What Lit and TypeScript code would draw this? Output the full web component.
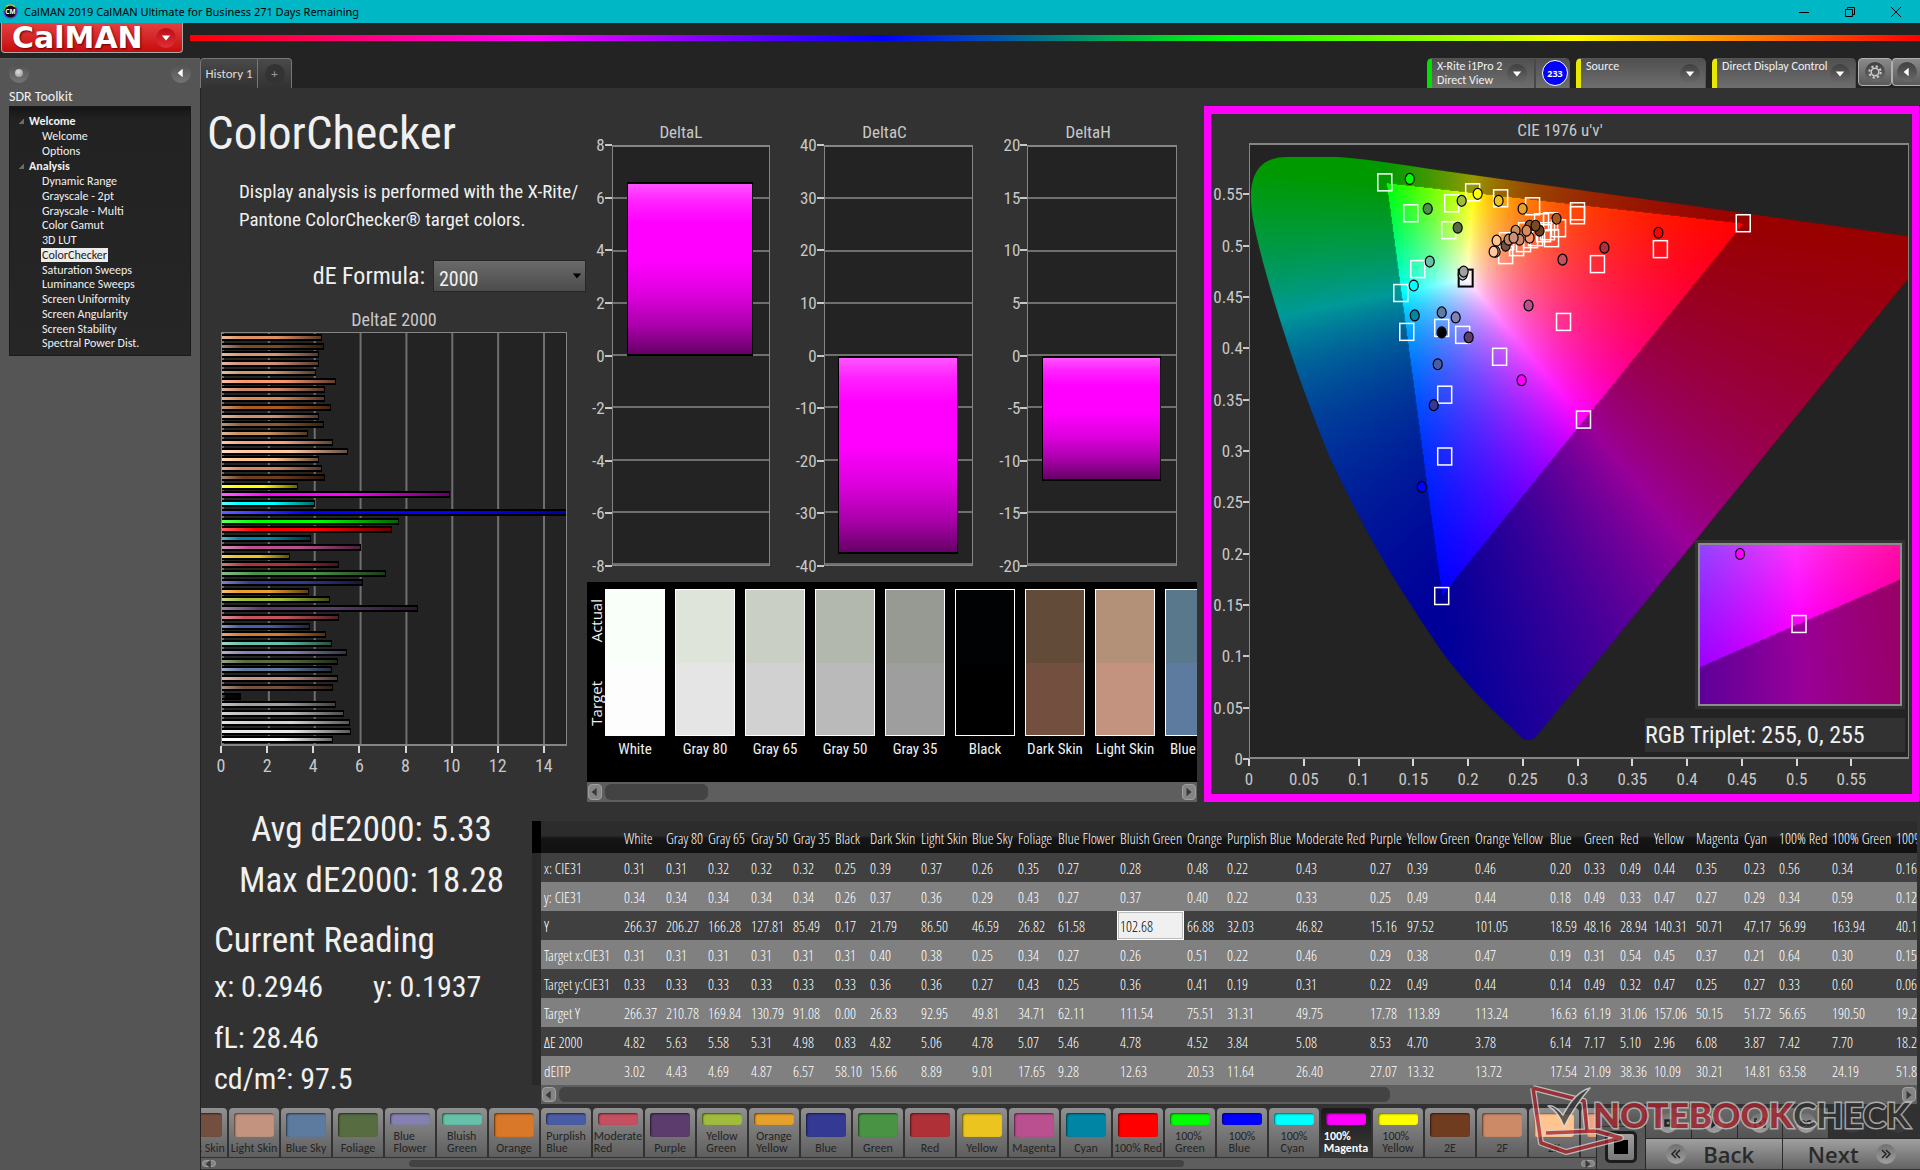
import { LitElement, html, css, svg, nothing } from "lit";
import { customElement, property } from "lit/decorators.js";
import { classMap } from "lit/directives/class-map.js";
import { styleMap } from "lit/directives/style-map.js";

/* ---------- data ---------- */

const NAV = [
  { title: "Welcome", items: ["Welcome", "Options"] },
  {
    title: "Analysis",
    items: ["Dynamic Range", "Grayscale - 2pt", "Grayscale - Multi", "Color Gamut", "3D LUT", "ColorChecker",
      "Saturation Sweeps", "Luminance Sweeps", "Screen Uniformity", "Screen Angularity", "Screen Stability", "Spectral Power Dist."],
  },
];

const DE_BARS: [number, string][] = [
  [4.35, "#e09060"], [4.45, "#7a4a25"], [4.25, "#d89470"], [4.25, "#cf9078"], [4.1, "#cc9870"], [4.95, "#f89870"],
  [4.5, "#d08868"], [4.5, "#dd8858"], [4.75, "#a85a22"], [4.25, "#cc9070"], [4.45, "#90582e"], [3.75, "#c89060"],
  [4.85, "#f4a47c"], [5.5, "#ffc8a4"], [4.25, "#ffc490"], [4.35, "#d48664"], [4.5, "#703c20"], [3.3, "#ffff00"],
  [9.95, "#ff00ff"], [4.05, "#00ffff"], [18.28, "#0000ff"], [7.7, "#00ff00"], [7.42, "#ff0000"], [3.87, "#0086a5"],
  [6.08, "#bb5090"], [2.96, "#ecc420"], [5.1, "#b03038"], [7.17, "#489444"], [6.14, "#343a94"], [3.78, "#e6a02c"],
  [4.7, "#a0bc3c"], [8.53, "#5c3c6c"], [5.08, "#c45060"], [3.84, "#4a5ca4"], [4.52, "#d87828"], [4.78, "#66c0aa"],
  [5.46, "#8480b0"], [5.07, "#586c40"], [4.78, "#5e7ca0"], [5.06, "#c49480"], [4.82, "#745040"], [0.83, "#050505"],
  [4.98, "#a0a0a0"], [5.31, "#bcbcbc"], [5.58, "#d2d2d2"], [5.63, "#e8e8e8"], [4.82, "#ffffff"],
];

const SWATCHES: [string, string, string][] = [
  ["White", "#f9fff9", "#fdfdfd"], ["Gray 80", "#dfe4da", "#e5e5e5"], ["Gray 65", "#cacfc5", "#d1d1d1"],
  ["Gray 50", "#b2b8ad", "#bababa"], ["Gray 35", "#979a92", "#9e9e9e"], ["Black", "#010203", "#000000"],
  ["Dark Skin", "#634b39", "#734f40"], ["Light Skin", "#b29178", "#c39380"], ["Blue Sky", "#59788b", "#5d7a9f"],
];

const COLS: [string, number][] = [
  ["White", 42], ["Gray 80", 42], ["Gray 65", 43], ["Gray 50", 42], ["Gray 35", 42], ["Black", 35], ["Dark Skin", 51],
  ["Light Skin", 51], ["Blue Sky", 46], ["Foliage", 40], ["Blue Flower", 62], ["Bluish Green", 67], ["Orange", 40],
  ["Purplish Blue", 69], ["Moderate Red", 74], ["Purple", 37], ["Yellow Green", 68], ["Orange Yellow", 75], ["Blue", 34],
  ["Green", 36], ["Red", 34], ["Yellow", 42], ["Magenta", 48], ["Cyan", 35], ["100% Red", 53], ["100% Green", 64], ["100% Blue", 64],
];

const ROWS: [string, string][] = [
  ["x: CIE31", "0.31 0.31 0.32 0.32 0.32 0.25 0.39 0.37 0.26 0.35 0.27 0.28 0.48 0.22 0.43 0.27 0.39 0.46 0.20 0.33 0.49 0.44 0.35 0.23 0.56 0.34 0.16"],
  ["y: CIE31", "0.34 0.34 0.34 0.34 0.34 0.26 0.37 0.36 0.29 0.43 0.27 0.37 0.40 0.22 0.33 0.25 0.49 0.44 0.18 0.49 0.33 0.47 0.27 0.29 0.34 0.59 0.12"],
  ["Y", "266.37 206.27 166.28 127.81 85.49 0.17 21.79 86.50 46.59 26.82 61.58 102.68 66.88 32.03 46.82 15.16 97.52 101.05 18.59 48.16 28.94 140.31 50.71 47.17 56.99 163.94 40.14"],
  ["Target x:CIE31", "0.31 0.31 0.31 0.31 0.31 0.31 0.40 0.38 0.25 0.34 0.27 0.26 0.51 0.22 0.46 0.29 0.38 0.47 0.19 0.31 0.54 0.45 0.37 0.21 0.64 0.30 0.15"],
  ["Target y:CIE31", "0.33 0.33 0.33 0.33 0.33 0.33 0.36 0.36 0.27 0.43 0.25 0.36 0.41 0.19 0.31 0.22 0.49 0.44 0.14 0.49 0.32 0.47 0.25 0.27 0.33 0.60 0.06"],
  ["Target Y", "266.37 210.78 169.84 130.79 91.08 0.00 26.83 92.95 49.81 34.71 62.11 111.54 75.51 31.31 49.75 17.78 113.89 113.24 16.63 61.19 31.06 157.06 50.15 51.72 56.65 190.50 19.23"],
  ["ΔE 2000", "4.82 5.63 5.58 5.31 4.98 0.83 4.82 5.06 4.78 5.07 5.46 4.78 4.52 3.84 5.08 8.53 4.70 3.78 6.14 7.17 5.10 2.96 6.08 3.87 7.42 7.70 18.28"],
  ["dEITP", "3.02 4.43 4.69 4.87 6.57 58.10 15.66 8.89 9.01 17.65 9.28 12.63 20.53 11.64 26.40 27.07 13.32 13.72 17.54 21.09 38.36 10.09 30.21 14.81 63.58 24.19 51.84"],
];

const PATCHES: [string, string][] = [
  ["Dark Skin", "#734f40"], ["Light Skin", "#c39380"], ["Blue Sky", "#5d7a9f"], ["Foliage", "#576c41"], ["Blue|Flower", "#8480b0"],
  ["Bluish|Green", "#66c0aa"], ["Orange", "#d87828"], ["Purplish|Blue", "#4a5ca4"], ["Moderate|Red", "#c45060"], ["Purple", "#5c3c6c"],
  ["Yellow|Green", "#a0bc3c"], ["Orange|Yellow", "#e6a02c"], ["Blue", "#343a94"], ["Green", "#489444"], ["Red", "#b03038"],
  ["Yellow", "#ecc420"], ["Magenta", "#bb5090"], ["Cyan", "#0086a5"], ["100% Red", "#ff0000"], ["100%|Green", "#00ff00"],
  ["100%|Blue", "#0000ff"], ["100%|Cyan", "#00ffff"], ["100%|Magenta", "#ff00ff"], ["100%|Yellow", "#ffff00"],
  ["2E", "#703c20"], ["2F", "#cc8a66"], ["2K", "#ffc490"], ["5D", "#f4a47c"],
];

/* Marker centres in plot pixels; the plot spans 659 x 614 units for u' 0..0.601, v' 0.6..0 */
const TARGETS: [number, number][] = [
  [135, 37], [161, 68], [202, 58], [223, 47], [251, 53], [199, 85], [283, 61], [328, 66], [328, 70], [494, 78], [411, 104],
  [348, 119], [168, 124], [151, 148], [157, 187], [192, 183], [213, 190], [250, 212], [195, 250], [334, 275], [314, 177],
  [195, 312], [192, 452],
  [257, 96], [256, 110], [267, 102], [274, 98], [281, 94], [286, 92], [276, 86], [292, 77], [301, 76], [309, 83], [302, 93], [294, 88], [298, 86],
];
const READINGS: [number, number, string][] = [
  [160, 34, "#00ff00"], [178, 64, "#489444"], [212, 56, "#a0bc3c"], [228, 49, "#ffff00"], [249, 56, "#ecc420"],
  [208, 83, "#586c40"], [273, 64, "#e6a02c"], [180, 117, "#66c0aa"], [164, 141, "#00ffff"], [165, 171, "#0086a5"],
  [192, 168, "#5e7ca0"], [206, 173, "#8480b0"], [192, 188, "#000000"], [219, 193, "#5c3c6c"], [188, 220, "#4a5ca4"],
  [184, 261, "#343a94"], [272, 236, "#ff00ff"], [279, 161, "#bb5090"], [313, 115, "#c45060"], [355, 103, "#b03038"],
  [409, 88, "#ff0000"], [172, 343, "#0000ff"], [213, 130, "#bcbcbc"], [214, 127, "#a0a0a0"],
  [247, 96, "#ffc490"], [246, 107, "#f4a47c"], [244, 107, "#ffc8a4"], [256, 101, "#745040"], [259, 95, "#c48860"],
  [266, 86, "#c89060"], [270, 95, "#d08868"], [264, 93, "#cf9078"], [280, 81, "#90582e"], [290, 86, "#703c20"],
  [280, 93, "#f89870"], [286, 81, "#7a4a25"], [277, 86, "#dd8858"], [307, 74, "#a85a22"],
];

/* ---------- chromaticity rendering ---------- */

function traceLocus(c: CanvasRenderingContext2D) {
  c.beginPath();
  c.moveTo(37, 12);
  c.lineTo(88, 12);
  c.quadraticCurveTo(112, 13, 180, 24);
  c.lineTo(493, 68);
  c.lineTo(690, 96);
  c.lineTo(286, 594);
  c.quadraticCurveTo(280, 600, 272, 595);
  c.bezierCurveTo(262, 582, 236, 566, 194, 511);
  c.bezierCurveTo(165, 466, 133, 425, 81, 316);
  c.bezierCurveTo(48, 236, 16, 138, 4, 80);
  c.bezierCurveTo(-5, 34, 6, 12, 37, 12);
  c.closePath();
}

/** Full-brightness RGB for a chromaticity; colours outside the gamut are dimmed. */
function chroma(x: number, y: number): [number, number, number] {
  const yy = Math.max(y, 0.0001);
  const X = x / yy, Z = (1 - x - y) / yy;
  const lin = [3.2406 * X - 1.5372 - 0.4986 * Z, -0.9689 * X + 1.8758 + 0.0415 * Z, 0.0557 * X - 0.204 + 1.057 * Z];
  const dim = Math.min(...lin) < 0 ? 0.6 : 1;
  const max = Math.max(...lin);
  return lin.map((v) => (dim * 255 * Math.max(v, 0)) / max) as [number, number, number];
}

function paint(canvas: HTMLCanvasElement, toXY: (px: number, py: number) => [number, number]) {
  const c = canvas.getContext("2d")!;
  const { width, height } = canvas;
  const img = c.createImageData(width, height);
  for (let py = 0, i = 0; py < height; py++) {
    for (let px = 0; px < width; px++, i += 4) {
      const [r, g, b] = chroma(...toXY(px + 0.5, py + 0.5));
      img.data[i] = r; img.data[i + 1] = g; img.data[i + 2] = b; img.data[i + 3] = 255;
    }
  }
  c.putImageData(img, 0, 0);
}

/* ---------- shared styles ---------- */

const base = css`
  *, *::before, *::after { box-sizing: border-box; }
  button, select { font: inherit; color: inherit; margin: 0; padding: 0; border: 0; background: none; }
  .narrow { font-family: "Roboto Condensed", "Liberation Sans", sans-serif; }
`;

const arrow = (dir: "left" | "right" | "down") => {
  const d = { left: "M8 1 L2 6 L8 11 Z", right: "M3 1 L9 6 L3 11 Z", down: "M1 3 L11 3 L6 9 Z" }[dir];
  return html`<svg class="arrow" viewBox="0 0 12 12" width="10" height="10" aria-hidden="true">${svg`<path d=${d} fill="currentColor"></path>`}</svg>`;
};

/* ---------- scrollbar ---------- */

@customElement("scroll-strip")
export class ScrollStrip extends LitElement {
  @property({ type: Number }) start = 0;
  @property({ type: Number }) size = 50;
  static styles = [base, css`
    :host { display: flex; align-items: stretch; background: #5e5e5e; color: #3a3a3a; }
    button { flex: none; width: 14px; display: flex; align-items: center; justify-content: center; background: #858585; border: 1px solid #a0a0a0; border-radius: 4px; margin: 2px 1px; }
    .track { flex: 1; margin: 2px; display: flex; }
    .thumb { background: #434343; border-radius: 6px; }
    svg { width: 10px; height: 14px; }
  `];
  render() {
    return html`
      <button aria-label="Scroll left">${arrow("left")}</button>
      <div class="track">
        <div style=${styleMap({ width: `${this.start}%` })}></div>
        <div class="thumb" style=${styleMap({ width: `${this.size}%` })}></div>
      </div>
      <button aria-label="Scroll right">${arrow("right")}</button>`;
  }
}

/* ---------- DeltaL / DeltaC / DeltaH ---------- */

@customElement("delta-chart")
export class DeltaChart extends LitElement {
  @property() name = "";
  @property({ type: Number }) max = 8;
  @property({ type: Number }) value = 0;
  static styles = [base, css`
    :host { display: block; color: #c8c8c8; }
    .title { text-align: center; font-size: 17px; line-height: 25px; }
    .body { display: flex; height: 421px; }
    .axis { display: flex; flex-direction: column; justify-content: space-between; font-size: 17px; }
    .mark { height: 0; display: flex; align-items: center; justify-content: flex-end; }
    .mark::after { content: ""; width: 7px; height: 2px; background: #c8c8c8; }
    .plot { flex: 1; position: relative; display: flex; flex-direction: column; background: #232323; border: 1px solid #858585; border-top: 2px solid #858585; }
    .line { flex: 1; border-bottom: 2px solid #6f6f6f; }
    .line:last-of-type { border-bottom-width: 1px; }
    .bar { position: absolute; left: 9%; right: 10%; border: 2px solid #000; border-left-width: 1px; border-right-width: 1px;
      background: linear-gradient(#ff55ff, #ff22ff 10%, #ff00ff 23%, #ff00ff 45%, #dd00dd 65%, #a800a8 84%, #660066); }
  `];
  render() {
    const top = 50 - (Math.max(this.value, 0) / this.max) * 50;
    const ticks = Array.from({ length: 9 }, (_, i) => this.max - (i * this.max) / 4);
    return html`
      <div class="title narrow">${this.name}</div>
      <div class="body">
        <div class="axis narrow">${ticks.map((t) => html`<span class="mark">${t}</span>`)}</div>
        <div class="plot">
          ${ticks.slice(1).map(() => html`<div class="line"></div>`)}
          <div class="bar" style=${styleMap({ top: `${top}%`, height: `${(Math.abs(this.value) / this.max) * 50}%` })}></div>
        </div>
      </div>`;
  }
}

/* ---------- CIE 1976 chart ---------- */

@customElement("cie-chart")
export class CieChart extends LitElement {
  static styles = [base, css`
    :host { display: flex; flex-direction: column; border: 8px solid #ff00ff; border-left-width: 7px; border-right-width: 7px; color: #c8c8c8; background: #323232; padding: 4px 3px 0 0; font-size: 17px; }
    .title { text-align: center; line-height: 25px; }
    .body { display: grid; grid-template-columns: 38px 1fr; grid-template-rows: 616px 35px; }
    .yaxis { display: grid; grid-auto-rows: 1fr; }
    .yaxis span { align-self: end; height: 0; display: flex; align-items: center; justify-content: flex-end; }
    .yaxis span::after { content: ""; width: 6px; height: 2px; background: #c8c8c8; }
    .xaxis { grid-column: 2; display: flex; }
    .xaxis span { flex: 0 0 8.3%; }
    .xaxis i { font-style: normal; width: 0; display: flex; flex-direction: column; align-items: center; line-height: 26px; }
    .xaxis i::before { content: ""; width: 2px; height: 7px; background: #d8d8d8; }
    .plot { position: relative; background: #232323; border: 2px solid #858585; border-width: 2px 1px 2px 1px; overflow: hidden; }
    canvas, svg.markers { position: absolute; left: 0; top: 0; width: 100%; height: 100%; }
    .inset { position: absolute; right: 3px; top: 395px; width: 210px; height: 169px; padding: 3px; background: #323232; }
    .frame { position: relative; height: 100%; border: 2px solid #8c8c8c; }
    .triplet { position: absolute; right: 3px; bottom: 5px; width: 260px; font-size: 24px; line-height: 34px; color: #f0f0f0; background: #323232; white-space: nowrap; }
  `];
  firstUpdated() {
    const main = this.renderRoot.querySelector<HTMLCanvasElement>(".main")!;
    paint(main, (px, py) => {
      const u = px / 1096, v = 0.6 - py / 1022, d = 6 * u - 16 * v + 12;
      return [(9 * u) / d, (4 * v) / d];
    });
    const c = main.getContext("2d")!;
    c.globalCompositeOperation = "destination-in";
    traceLocus(c);
    c.fill();
    paint(this.renderRoot.querySelector<HTMLCanvasElement>(".detail")!, (px, py) => [0.271 + px / 2000, 0.2035 - py / 1600]);
  }
  private box(x: number, y: number, color = "#fff") {
    return svg`<rect x=${x - 7} y=${y - 8} width="14" height="17" fill="none" stroke=${color} stroke-width=${color === "#fff" ? 1.5 : 2}></rect>`;
  }
  private dot(x: number, y: number, fill: string) {
    return svg`<ellipse cx=${x} cy=${y} rx="4.5" ry="5.5" fill=${fill} stroke="#000" stroke-width="1.2"></ellipse>`;
  }
  render() {
    const marks = Array.from({ length: 12 }, (_, i) => Number((i * 0.05).toFixed(2)));
    return html`
      <div class="title narrow">CIE 1976 u'v'</div>
      <div class="body narrow">
        <div class="yaxis">${[...marks].reverse().map((m) => html`<span>${m}</span>`)}</div>
        <div class="plot">
          <canvas class="main" width="659" height="614"></canvas>
          <svg class="markers" viewBox="0 0 659 614" preserveAspectRatio="none" aria-hidden="true">
            ${TARGETS.map(([x, y]) => this.box(x, y))}
            ${this.box(216, 133, "#000")}
            ${READINGS.map(([x, y, f]) => this.dot(x, y, f))}
          </svg>
          <div class="inset"><div class="frame">
            <canvas class="detail" width="200" height="160"></canvas>
            <svg class="markers" viewBox="0 0 200 160" preserveAspectRatio="none" aria-hidden="true">
              ${this.dot(40, 9, "#ff00ff")}${this.box(99, 79)}
            </svg>
          </div></div>
          <div class="triplet">RGB Triplet: 255, 0, 255</div>
        </div>
        <div class="xaxis">${marks.map((m) => html`<span><i>${m}</i></span>`)}</div>
      </div>`;
  }
}

/* ---------- application ---------- */

@customElement("app-root")
export class AppRoot extends LitElement {
  static styles = [base, css`
    :host { display: flex; flex-direction: column; min-height: 100vh; background: #232323; color: #f0f0f0; font-family: Carlito, Lato, sans-serif; font-size: 13px; overflow: hidden; }

    .titlebar { display: flex; align-items: center; height: 23px; padding: 0 4px 0 3px; gap: 6px; background: #00b7c6; color: #000; font: 11px/23px "Noto Sans", sans-serif; }
    .titlebar .name { flex: 1; }
    .winctl { width: 40px; display: flex; align-items: center; justify-content: center; }
    .brand { display: flex; align-items: center; height: 35px; }
    .logo { align-self: flex-start; display: flex; align-items: center; justify-content: space-between; width: 182px; height: 30px; margin-left: 1px; padding: 0 6px 0 10px; background: linear-gradient(#e24040, #c80c0c); border: 1px solid #a8a8a8; border-top: 0; border-radius: 0 0 4px 4px; color: #fff; font: 700 30px/28px "DejaVu Sans", sans-serif; text-shadow: 1px 1px 2px #600; }
    .rainbow { flex: 1; height: 6px; margin: 0 0 5px 7px; background: linear-gradient(to right, #f00, #f0f 20%, #00f 40%, #0f0 60%, #ff0 80%, #f00); }
    .knob { flex: none; display: flex; align-items: center; justify-content: center; width: 20px; height: 20px; border-radius: 50%; background: linear-gradient(#404040, #6a6a6a); color: #fff; }
    .logo .knob { background: linear-gradient(#b80c14, #e03038); }

    .main { flex: 1; display: flex; }
    .sidebar { flex: none; width: 200px; background: #555; padding: 4px 9px 0; border-top: 1px solid #5e5e5e; }
    .sidebar .tools { display: flex; justify-content: space-between; }
    .tools .knob { background: linear-gradient(#505050, #747474); }
    .bead { width: 8px; height: 8px; border-radius: 50%; background: radial-gradient(circle at 40% 35%, #e0e0e0, #8a8a8a); }
    .kit { font-size: 14px; line-height: 18px; margin-top: 5px; }
    .tree { padding: 6px 0 6px 19px; height: 250px; background: linear-gradient(#151515, #222 5%, #262626); border: 1px solid #1a1a1a; font-size: 12px; }
    .tree h2 { margin: 0; font-size: 12px; line-height: 16px; display: flex; align-items: center; }
    .tree h2::before { content: ""; width: 5px; height: 5px; margin: 0 5px 0 -10px; background: linear-gradient(135deg, transparent 50%, #6a6a6a 50%); }
    .tree ul { margin: 0; padding: 0 0 0 12px; list-style: none; display: grid; grid-auto-rows: 1fr; }
    .tree .short { height: 29px; }
    .tree .long { height: 177px; }
    .tree a { color: inherit; text-decoration: none; padding: 0 1px; line-height: 14px; display: inline-block; }
    .tree a.on { background: #ececec; color: #222; }

    .work { flex: 1; min-width: 0; display: flex; flex-direction: column; }
    .tabbar { display: flex; justify-content: space-between; height: 30px; }
    .tabs { display: flex; }
    .tab { width: 58px; border: 1px solid #777; border-bottom: 0; border-radius: 4px 0 0 0; background: linear-gradient(#4a4a4a, #323232); color: #ddd; font-size: 13px; }
    .tab.add { width: 34px; border-left: 0; border-radius: 0 4px 0 0; display: flex; align-items: center; justify-content: center; }
    .add .knob { background: #333; color: #999; }
    .devices { display: flex; gap: 6px; font-size: 12px; line-height: 14px; }
    .device { display: flex; align-items: center; background: linear-gradient(#505050, #6e6e6e); border: 1px solid #555; border-bottom: 0; border-radius: 5px 5px 0 0; padding: 0 5px 0 5px; text-align: left; border-left: 5px solid #e8e800; }
    .device .lbl { flex: 1; align-self: flex-start; }
    .device.meter { width: 143px; border-left-color: #00e000; padding-right: 1px; }
    .device.src { width: 130px; }
    .device.disp { width: 144px; }
    .device.disp .lbl { white-space: nowrap; margin-right: -24px; }
    .level { margin-left: 7px; padding: 1px 0 0 6px; border-left: 2px solid #484848; align-self: stretch; }
    .level b { display: flex; align-items: center; justify-content: center; width: 26px; height: 26px; border-radius: 50%; background: #00f; border: 1px solid #fff; color: #fff; font: 700 9px "Open Sans", sans-serif; }
    .sq { width: 34px; height: 28px; display: flex; align-items: center; justify-content: center; background: linear-gradient(#8a8a8a, #5a5a5a); border: 1px solid #b0b0b0; border-radius: 4px; margin-left: -4px; }
    .sq.edge { width: 28px; margin-left: -6px; border-right: 0; border-radius: 4px 0 0 4px; }

    .content { flex: 1; display: flex; flex-direction: column; background: #323232; border-left: 1px solid #222; }
    .upper { display: grid; grid-template-columns: 386fr 610fr 722fr; padding-right: 1px; }
    .intro { padding: 15px 0 0 6px; min-width: 0; }
    h1 { margin: 0; font-size: 47px; line-height: 60px; font-weight: 400; }
    .lead { margin: 15px 0 0 32px; font-size: 19px; line-height: 28px; white-space: nowrap; }
    .formula { display: flex; justify-content: flex-end; align-items: center; gap: 8px; margin: 26px 1px 0 0; font-size: 24px; line-height: 32px; }
    .formula select { appearance: none; width: 153px; height: 32px; padding: 2px 5px 0; font-size: 20px; background: linear-gradient(#6a6a6a, #4c4c4c); border: 1px solid #262626; }
    .pick { position: relative; display: flex; }
    .pick svg { position: absolute; right: 4px; top: 11px; color: #000; pointer-events: none; }
    .de { margin: 15px 20px 0 14px; color: #c8c8c8; font-size: 18px; }
    .de .cap { text-align: center; line-height: 25px; }
    .de .plot { height: 414px; display: flex; flex-direction: column; overflow: hidden; border: 2px solid #858585; border-width: 1px 1px 2px; background: linear-gradient(to right, #6f6f6f 2px, transparent 2px) 0 0 / 13.3333% 100% #232323; }
    .de .row { flex: 1; display: flex; align-items: center; }
    .de .bar { height: 7px; flex: none; border: 2px solid #000; border-width: 2px 1px; border-left: 0; background-image: linear-gradient(to right, rgba(255,255,255,.38), rgba(255,255,255,0) 20%, rgba(0,0,0,0) 55%, rgba(0,0,0,.6)); }
    .ticks { display: flex; }
    .ticks span { flex: 0 0 13.3333%; }
    .ticks i { font-style: normal; width: 0; display: flex; flex-direction: column; align-items: center; line-height: 25px; }
    .ticks i::before { content: ""; width: 2px; height: 7px; background: #d8d8d8; }

    .centre { min-width: 0; display: flex; flex-direction: column; gap: 16px; padding-top: 32px; }
    .deltas { display: grid; grid-template-columns: repeat(3, 1fr); gap: 26px; padding: 0 20px 0 5px; }
    .compare { background: #000; overflow: hidden; }
    .strip { display: flex; gap: 10px; height: 200px; padding: 7px 0 0; overflow: hidden; }
    .side { flex: none; width: 18px; margin-right: -10px; height: 147px; padding: 10px 0; display: flex; flex-direction: column-reverse; justify-content: space-between; align-items: center; font: 15px "Open Sans", sans-serif; }
    .side span { writing-mode: vertical-rl; transform: rotate(180deg); line-height: 16px; }
    .chip { flex: none; width: 60px; }
    .chip .tone { height: 147px; border: 1px solid #fff; display: flex; flex-direction: column; }
    .tone div { flex: 1; }
    .chip p { margin: 0 -10px; text-align: center; font-size: 15px; line-height: 26px; }
    .compare scroll-strip { height: 20px; }
    cie-chart { margin: 18px 0 0 7px; }

    .lower { display: flex; }
    .stats { flex: none; width: 331px; padding: 2px 0 0 13px; white-space: nowrap; }
    .stats p { margin: 0; }
    .big { font-size: 35px; line-height: 51px; }
    .stats .mid { text-align: center; margin-left: -3px; }
    .stats .current { margin-top: 9px; }
    .val { display: flex; font-size: 30px; line-height: 41px; }
    .val span { width: 161px; }
    .stats .lum { margin-top: 10px; }
    .grid { flex: 1; min-width: 0; margin: 19px 3px 0 0; overflow: hidden; }
    .clip { overflow: hidden; }
    table { table-layout: fixed; width: 1425px; border-collapse: collapse; color: #fff; font: 15px "Open Sans Condensed Light", "Roboto Condensed", sans-serif; }
    th, td { padding: 0 0 0 3px; font-weight: 400; text-align: left; white-space: nowrap; height: 29px; line-height: 28px; }
    thead th { height: 32px; padding-top: 2px; background: linear-gradient(#2c2c2c 45%, #151515 55%, #111); }
    tbody tr { background: #404040; }
    tbody tr:nth-child(even) { background: #808080; }
    .rail { background: #292929; }
    thead .rail { background: #000; }
    td.sel { background: #f0f0f0; color: #000; box-shadow: inset 0 0 0 1px #fff, inset 0 0 0 2px #bbb; }
    .grid scroll-strip { height: 19px; margin-left: 9px; }

    .footer { position: relative; display: flex; height: 62px; margin-top: 4px; padding-bottom: 1px; background: #323232; }
    .patches { flex: 1; min-width: 0; overflow: hidden; }
    .row { display: flex; gap: 2px; }
    .patches .row { margin-left: -24px; height: 50px; }
    .patch { flex: none; width: 50px; height: 49px; display: flex; flex-direction: column; align-items: center; justify-content: space-between; padding: 5px 0 3px; border-radius: 4px 4px 0 0; background: linear-gradient(#909090, #5e5e5e); color: #242424; font-size: 12px; line-height: 12px; text-align: left; white-space: nowrap; }
    .patch i { width: 40px; height: 24px; border-radius: 3px; box-shadow: inset 1px 1px 2px rgba(0,0,0,.6); }
    .patch.two i { height: 12px; }
    .patch.on { background: linear-gradient(#1a1a1a, #3a3a3a); color: #fff; font-weight: 700; }
    .patches scroll-strip { height: 11px; }
    .stop { flex: none; width: 50px; border: solid #262626; border-width: 0 1px; display: flex; flex-direction: column; align-items: center; background: #585858; }
    .stop .up { width: 100%; height: 19px; background: linear-gradient(#6a6a6a, #505050); border-bottom: 1px solid #333; display: flex; justify-content: center; align-items: flex-end; }
    .stop .sqr { margin-top: 4px; width: 32px; height: 32px; border: 3px solid #1c1c1c; border-radius: 5px; background: linear-gradient(#a0a0a0, #777); display: flex; align-items: center; justify-content: center; }
    .stop .sqr::before { content: ""; width: 14px; height: 14px; background: #000; }
    .play { flex: none; width: 274px; display: grid; grid-template-columns: repeat(6, 1fr); grid-template-rows: 30px 30px; gap: 1px; background: #2a2a2a; }
    .play button { display: flex; align-items: center; justify-content: center; background: linear-gradient(#6a6a6a, #545454); color: #222; }
    .play .dark { background: #333; opacity: .8; }
    .play .rd { display: flex; align-items: center; justify-content: center; width: 20px; height: 20px; border-radius: 50%; background: linear-gradient(#707070, #a0a0a0); }
    .play .dark .rd { background: #404040; }
    .play .wide { grid-column: span 3; gap: 17px; font: 600 22px "Open Sans", sans-serif; color: #2a2a2a; background: linear-gradient(#a0a0a0, #636363); }
    .play .back { padding-right: 8px; }

    .mark { position: absolute; right: 10px; top: -24px; display: flex; align-items: flex-start; opacity: .78; pointer-events: none; }
    .mark svg { margin-right: -31px; }
    .word { font: 900 35px/40px Lato, sans-serif; padding-top: 10px; display: flex; color: #a8262e; paint-order: stroke fill; -webkit-text-stroke: 3px #c4c4c4; }
    .word span { color: #303030; font-weight: 700; }
  `];

  private renderTop() {
    return html`
      <header class="titlebar">
        <svg width="15" height="15" viewBox="0 0 16 16" aria-hidden="true">
          <circle cx="8" cy="8" r="7" fill="#0a0a0a" stroke="#6a3ad0" stroke-width="1.5"></circle>
          <path d="M3 3A7 7 0 0 1 13 3" fill="none" stroke="#b8d820" stroke-width="1.5"></path>
          <path d="M1 7A7 7 0 0 1 3 3" fill="none" stroke="#30c040" stroke-width="1.5"></path>
          <text x="8" y="10.500" text-anchor="middle" font-family="Open Sans" font-weight="700" font-size="7" fill="#fff">CM</text>
        </svg>
        <span class="name">CalMAN 2019 CalMAN Ultimate for Business 271 Days Remaining</span>
        <button class="winctl" aria-label="Minimize"><svg width="12" height="12" viewBox="0 0 12 12"><path d="M1 6.500H11" stroke="#000"></path></svg></button>
        <button class="winctl" aria-label="Restore"><svg width="12" height="12" viewBox="0 0 12 12" fill="none" stroke="#000"><path d="M1.500 3.500H8.500V10.500H1.500ZM3.500 3.500V1.500H10.500V8.500H8.500"></path></svg></button>
        <button class="winctl" aria-label="Close"><svg width="12" height="12" viewBox="0 0 12 12" stroke="#000"><path d="M1 1L11 11M11 1L1 11"></path></svg></button>
      </header>
      <div class="brand">
        <button class="logo">CalMAN <span class="knob">${arrow("down")}</span></button>
        <div class="rainbow"></div>
      </div>`;
  }

  private renderSidebar() {
    return html`
      <nav class="sidebar">
        <div class="tools">
          <button class="knob" aria-label="Pin"><span class="bead"></span></button>
          <button class="knob" aria-label="Collapse">${arrow("left")}</button>
        </div>
        <div class="kit">SDR Toolkit</div>
        <div class="tree">
          ${NAV.map((g) => html`
            <h2>${g.title}</h2>
            <ul class=${g.items.length > 2 ? "long" : "short"}>
              ${g.items.map((i) => html`<li><a href="#" class=${classMap({ on: i === "ColorChecker" })}>${i}</a></li>`)}
            </ul>`)}
        </div>
      </nav>`;
  }

  private renderTabs() {
    return html`
      <div class="tabbar">
        <div class="tabs">
          <button class="tab">History 1</button>
          <button class="tab add" aria-label="Add history"><span class="knob">+</span></button>
        </div>
        <div class="devices">
          <button class="device meter"><span class="lbl">X-Rite i1Pro 2<br>Direct View</span><span class="knob">${arrow("down")}</span><span class="level"><b>233</b></span></button>
          <button class="device src"><span class="lbl">Source</span><span class="knob">${arrow("down")}</span></button>
          <button class="device disp"><span class="lbl">Direct Display Control</span><span class="knob">${arrow("down")}</span></button>
          <button class="sq" aria-label="Settings"><span class="knob"><svg width="14" height="14" viewBox="0 0 14 14" fill="none" stroke="#ccc"><circle cx="7" cy="7" r="3.800" stroke-width="1.500"></circle><circle cx="7" cy="7" r="5.700" stroke-width="2" stroke-dasharray="2.200 2.280"></circle></svg></span></button>
          <button class="sq edge" aria-label="Collapse panel"><span class="knob">${arrow("left")}</span></button>
        </div>
      </div>`;
  }

  private renderIntro() {
    return html`
      <section class="intro narrow">
        <h1>ColorChecker</h1>
        <p class="lead">Display analysis is performed with the X-Rite/<br>Pantone ColorChecker® target colors.</p>
        <div class="formula">
          <label for="formula">dE Formula:</label>
          <span class="pick"><select id="formula"><option>2000</option></select>${arrow("down")}</span>
        </div>
        <div class="de">
          <div class="cap">DeltaE 2000</div>
          <div class="plot">
            ${DE_BARS.map(([v, c]) => html`<div class="row"><div class="bar" style=${styleMap({ width: `${(v / 15) * 100}%`, backgroundColor: c })}></div></div>`)}
          </div>
          <div class="ticks">${[0, 2, 4, 6, 8, 10, 12, 14].map((t) => html`<span><i>${t}</i></span>`)}</div>
        </div>
      </section>`;
  }

  private renderCentre() {
    return html`
      <section class="centre">
        <div class="deltas">
          <delta-chart name="DeltaL" .max=${8} .value=${6.67}></delta-chart>
          <delta-chart name="DeltaC" .max=${40} .value=${-37.8}></delta-chart>
          <delta-chart name="DeltaH" .max=${20} .value=${-12}></delta-chart>
        </div>
        <div class="compare">
          <div class="strip">
            <div class="side"><span>Target</span><span>Actual</span></div>
            ${SWATCHES.map(([n, a, t]) => html`
              <div class="chip">
                <div class="tone"><div style=${styleMap({ background: a })}></div><div style=${styleMap({ background: t })}></div></div>
                <p class="narrow">${n}</p>
              </div>`)}
          </div>
          <scroll-strip .start=${0} .size=${18}></scroll-strip>
        </div>
      </section>`;
  }

  private renderLower() {
    return html`
      <div class="lower">
        <section class="stats narrow">
          <p class="big mid">Avg dE2000: 5.33</p>
          <p class="big mid">Max dE2000: 18.28</p>
          <p class="big current">Current Reading</p>
          <p class="val"><span>x: 0.2946</span><span>y: 0.1937</span></p>
          <p class="val lum">fL: 28.46</p>
          <p class="val">cd/m²: 97.5</p>
        </section>
        <section class="grid">
          <div class="clip">
            <table>
              <colgroup><col width="9"><col width="80">${COLS.map(([, w]) => html`<col width=${w}>`)}</colgroup>
              <thead><tr><th class="rail"></th><th></th>${COLS.map(([n]) => html`<th scope="col">${n}</th>`)}</tr></thead>
              <tbody>
                ${ROWS.map(([n, vals]) => html`<tr><td class="rail"></td><th scope="row">${n}</th>${vals.split(" ").map((v) =>
                  html`<td class=${classMap({ sel: v === "102.68" })}>${v}</td>`)}</tr>`)}
              </tbody>
            </table>
          </div>
          <scroll-strip .start=${0} .size=${62}></scroll-strip>
        </section>
      </div>`;
  }

  private renderFooter() {
    const icon = (d: string) => html`<span class="rd"><svg width="14" height="14" viewBox="0 0 14 14" fill="none" stroke="#222" stroke-width="1.500">${svg`<path d=${d}></path>`}</svg></span>`;
    return html`
      <footer class="footer">
        <div class="patches">
          <div class="row">
            ${PATCHES.map(([n, c]) => {
              const parts = n.split("|");
              return html`<button class=${classMap({ patch: true, two: parts.length > 1, on: n === "100%|Magenta" })}>
                <i style=${styleMap({ background: c })}></i><span>${parts[0]}${parts[1] ? html`<br>${parts[1]}` : nothing}</span></button>`;
            })}
          </div>
          <scroll-strip .start=${14} .size=${57}></scroll-strip>
        </div>
        <div class="stop">
          <button class="up" aria-label="Expand"><svg width="14" height="12" viewBox="0 0 14 12"><path d="M3 9L7 4L11 9Z" fill="#222"></path></svg></button>
          <button class="sqr" aria-label="Stop reading"></button>
        </div>
        <div class="play">
          <button aria-label="Stop">${icon("M4 4H10V10H4Z M5 5H9V9H5Z")}</button>
          <button aria-label="Play">${icon("M5 3L10 7L5 11Z M6 5L8 7L6 9Z")}</button>
          <button aria-label="Step">${icon("M4 3H2V11H4M10 3H12V11H10M5.500 7H8.500M7 5V9")}</button>
          <button aria-label="Loop">${icon("M7 7C5 4 2 4 2 7S5 10 7 7S12 4 12 7S9 10 7 7")}</button>
          <button class="dark" aria-label="Refresh">${icon("M11 7A4 4 0 1 1 9 3.500M9 1.500V4H6.500")}</button>
          <button class="dark" aria-label="More">${icon("M4 7H10")}</button>
          <button class="wide back">${icon("M7 3L3 7L7 11M11 3L7 7L11 11")}<span>Back</span></button>
          <button class="wide"><span>Next</span>${icon("M3 3L7 7L3 11M7 3L11 7L7 11")}</button>
        </div>
        <div class="mark">
          <svg width="94" height="72" viewBox="0 0 94 72" fill="none" stroke-linejoin="round">
            <path d="M3 4L54 17L57 47M3 4L11 59L36 68L91 54L66 47L16 49" stroke="#d4d4d4" stroke-width="6"></path>
            <path d="M3 4L54 17L57 47M3 4L11 59L36 68L91 54L66 47L16 49" stroke="#a8262e" stroke-width="3.500"></path>
            <path d="M18 22Q24 20 33 31Q45 8 60 4Q46 20 34 43Q28 27 18 22Z" fill="#3a3a3a" stroke="#dcdcdc" stroke-width="1.500"></path>
          </svg>
          <div class="word">NOTEBOOK<span>CHECK</span></div>
        </div>
      </footer>`;
  }

  render() {
    return html`
      ${this.renderTop()}
      <div class="main">
        ${this.renderSidebar()}
        <div class="work">
          ${this.renderTabs()}
          <main class="content">
            <div class="upper">${this.renderIntro()}${this.renderCentre()}<cie-chart></cie-chart></div>
            ${this.renderLower()}
            ${this.renderFooter()}
          </main>
        </div>
      </div>`;
  }
}
